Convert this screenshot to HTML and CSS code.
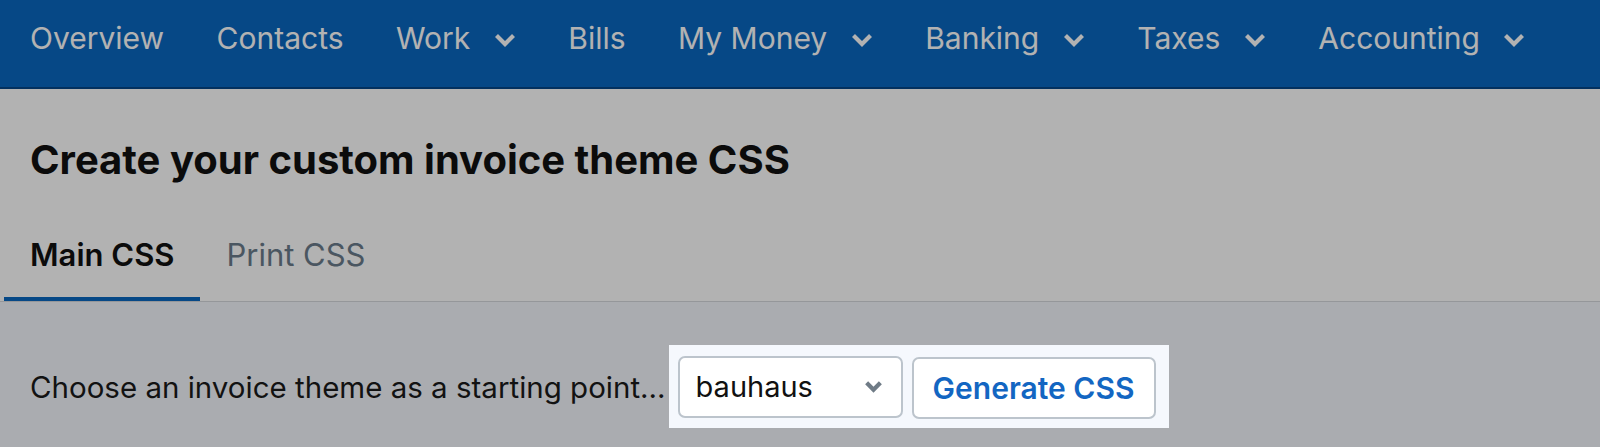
FILE: index.html
```html
<!DOCTYPE html>
<html lang="en">
<head>
    <meta charset="UTF-8">
    <meta name="viewport" content="width=device-width, initial-scale=1.0">
    <title>Custom Invoice Theme</title>

    <link rel="stylesheet" href="styles.css">
</head>
<body>

    <!-- Navbar -->
    <nav class="topnav">
        <a href="#">Overview</a>
        <a href="#">Contacts</a>
        <a href="#" class="has-menu">Work
            <svg class="chevron" viewBox="0 0 22 14"><polyline points="2.5,2.5 11,11 19.5,2.5"/></svg>
        </a>
        <a href="#">Bills</a>
        <a href="#" class="has-menu">My Money
            <svg class="chevron" viewBox="0 0 22 14"><polyline points="2.5,2.5 11,11 19.5,2.5"/></svg>
        </a>
        <a href="#" class="has-menu">Banking
            <svg class="chevron" viewBox="0 0 22 14"><polyline points="2.5,2.5 11,11 19.5,2.5"/></svg>
        </a>
        <a href="#" class="has-menu">Taxes
            <svg class="chevron" viewBox="0 0 22 14"><polyline points="2.5,2.5 11,11 19.5,2.5"/></svg>
        </a>
        <a href="#" class="has-menu">Accounting
            <svg class="chevron" viewBox="0 0 22 14"><polyline points="2.5,2.5 11,11 19.5,2.5"/></svg>
        </a>
    </nav>

    <!-- Page Header -->
    <header class="page-header">
        <h1>Create your custom invoice theme CSS</h1>

        <div class="tabs">
            <a href="#" class="tab active">Main CSS</a>
            <a href="#" class="tab">Print CSS</a>
        </div>
    </header>

    <!-- Theme Picker -->
    <main class="content">
        <div class="theme-row">
            <span class="theme-label">Choose an invoice theme as a starting point...</span>

            <div class="spotlight">
                <div class="select-box">
                    <span>bauhaus</span>
                    <svg class="select-chevron" viewBox="0 0 18 12"><polyline points="2.5,2.5 9,9 15.5,2.5"/></svg>
                </div>
                <button class="generate-btn">Generate CSS</button>
            </div>
        </div>
    </main>

    <!-- Tour overlay -->
    <div class="dim"></div>

</body>
</html>
```
FILE: styles.css
```css
/* Global Reset */
* {
    margin: 0;
    padding: 0;
    box-sizing: border-box;
}

/* Body */
body {
    font-family: 'Inter', 'Open Sans', sans-serif;
    background-color: #f4f7fc;
    color: #1a1a1a;
    height: 447px;
    overflow: hidden;
}

/* Navbar */
.topnav {
    height: 89px;
    padding: 0 30px 11px;
    display: flex;
    align-items: center;
    gap: 52.5px;
    background-color: #0967c0;
    border-bottom: 2px solid #054788;
}

.topnav a {
    color: #fff;
    text-decoration: none;
    font-size: 30px;
    line-height: 40px;
    display: flex;
    align-items: center;
    gap: 23.5px;
}

.chevron {
    width: 22px;
    height: 14px;
    margin-top: 4px;
    fill: none;
    stroke: #fff;
    stroke-width: 4.2;
}

/* Header */
.page-header {
    background-color: #fff;
    padding-top: 47px;
    border-bottom: 1px solid #d6d9dd;
}

.page-header h1 {
    font-size: 40px;
    line-height: 48px;
    font-weight: 700;
    color: #111;
    padding-left: 30px;
}

.tabs {
    display: flex;
    padding-left: 4px;
    margin-top: 51px;
}

.tab {
    font-size: 31px;
    line-height: 40px;
    padding: 0 26px 22px;
    color: #6b7c8c;
    text-decoration: none;
    border-bottom: 4px solid transparent;
}

.tab.active {
    color: #111;
    font-weight: 600;
    border-bottom-color: #0967c0;
}

/* Content */
.content {
    padding: 43px 30px 0;
}

.theme-row {
    display: flex;
    align-items: center;
}

.theme-label {
    font-size: 29.5px;
    margin-right: 3px;
}

.spotlight {
    position: relative;
    z-index: 20;
    display: flex;
    align-items: center;
    gap: 9px;
    padding: 9px 13px 9px 9px;
    background-color: #f5f8fd;
}

.select-box {
    width: 225px;
    height: 62px;
    padding: 0 18px 0 16px;
    display: flex;
    align-items: center;
    justify-content: space-between;
    background-color: #fff;
    border: 2px solid #bcc4cc;
    border-radius: 7px;
    font-size: 29px;
    color: #111;
}

.select-chevron {
    width: 19px;
    height: 13px;
    fill: none;
    stroke: #6f7b86;
    stroke-width: 4;
}

.generate-btn {
    width: 244px;
    height: 62px;
    margin-top: 3px;
    background-color: #fff;
    border: 2px solid #bcc4cc;
    border-radius: 7px;
    font-family: inherit;
    font-size: 30px;
    font-weight: 600;
    color: #1366c2;
    cursor: pointer;
}

/* Tour overlay */
.dim {
    position: fixed;
    top: 0;
    left: 0;
    right: 0;
    bottom: 0;
    background-color: rgba(0, 0, 0, 0.3);
    z-index: 10;
}
```
